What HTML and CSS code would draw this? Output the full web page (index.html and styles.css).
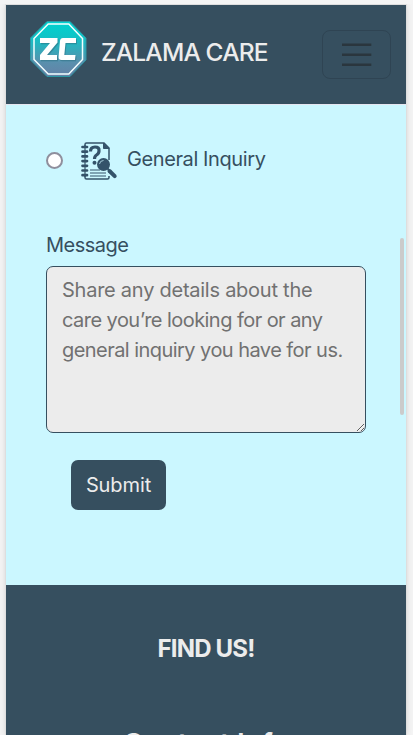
FILE: index.html
```html
<!DOCTYPE html>
<html lang="en">
<head>
<meta charset="utf-8">
<title>Zalama Care</title>
<link rel="stylesheet" href="styles.css">
</head>
<body>
<div class="screen">
  <header class="navbar">
    <svg class="logo" viewBox="0 0 57 57">
      <defs>
        <linearGradient id="teal" x1="0" y1="0" x2="0" y2="1">
          <stop offset="0" stop-color="#00d2d0"/>
          <stop offset=".25" stop-color="#0cc6c8"/>
          <stop offset=".75" stop-color="#5a8fad"/>
          <stop offset="1" stop-color="#6481a6"/>
        </linearGradient>
      </defs>
      <path d="M17 .5H40L56 17V39L40 55.500H17L.5 39V17Z" fill="url(#teal)" stroke="#2c97a4"/>
      <path d="M18.200 3H38.800L52.500 17.500V38.500L38.800 53H18.200L4 38.500V17.500Z" fill="none" stroke="#f4ffff" stroke-width="1.500"/>
      <g fill="#2e6d80" opacity=".5" transform="translate(1 1.200)">
        <path d="M10 17H27.500V21.500L17 34H27V39H10V34L20 22H10Z"/>
        <path d="M33 17H46V22H35.500L34.300 34H45.500L45 39H31.500Q28.300 39 28.600 36L30 20Q30.300 17 33 17Z"/>
      </g>
      <g fill="#fff">
        <path d="M10 17H27.500V21.500L17 34H27V39H10V34L20 22H10Z"/>
        <path d="M33 17H46V22H35.500L34.300 34H45.500L45 39H31.500Q28.300 39 28.600 36L30 20Q30.300 17 33 17Z"/>
      </g>
    </svg>
    <span class="brand">ZALAMA CARE</span>
    <button class="toggler" aria-label="Menu">
      <svg viewBox="0 0 30 30"><path d="M0 4.700H29.300M0 14.700H29.300M0 24.700H29.300" stroke="#2a363e" stroke-width="2.400"/></svg>
    </button>
  </header>
  <main class="form">
    <label class="option">
      <span class="radio"></span>
      <svg class="inquiry" viewBox="0 0 37 38">
        <g fill="none" stroke="#34536a">
          <path d="M4 4V2.500Q4 1 5.500 1H23L28 6V18M28 34V35.500Q28 37 26.500 37H5.500Q4 37 4 35.500V34" stroke-width="1.500"/>
          <path d="M22.500 1V6.500H28Z" fill="#34536a" stroke-width="1"/>
          <path d="M4 3V35" stroke-width="1.200"/>
          <path d="M1.500 5H6M1.500 9.700H6M1.500 14.400H6M1.500 19.100H6M1.500 23.800H6M1.500 28.500H6M1.500 33.200H6" stroke-width="2.700" stroke-linecap="round"/>
          <path d="M9.500 9.500Q9.500 5 14 5T18 9Q18 11.500 15.500 13Q13.500 14.200 13.500 17" stroke-width="3.200"/>
          <path d="M9 28H19M9 31H25M9 34H25" stroke-width="1.200"/>
          <path d="M28.500 29L33.700 34.200" stroke-width="4" stroke-linecap="round"/>
          <path d="M26 26L30 30" stroke-width="2"/>
        </g>
        <circle cx="13.500" cy="20.700" r="2" fill="#34536a"/>
        <circle cx="22.500" cy="22.500" r="6.500" fill="#34536a"/>
        <path d="M18.500 22Q19 18.500 22.500 18.500" fill="none" stroke="#a4cbd8" stroke-width="1"/>
      </svg>
      <span class="option-text">General Inquiry</span>
    </label>
    <div class="message-label" id="message-label">Message</div>
    <div class="message" role="textbox" aria-labelledby="message-label">
      <span class="line">Share any details about the</span>
      <span class="line tight">care you’re looking for or any</span>
      <span class="line tight">general inquiry you have for us.</span>
    </div>
    <button class="submit">Submit</button>
  </main>
  <footer class="footer">
    <h2 class="find">FIND US!</h2>
    <h3 class="contact">Contact Info</h3>
  </footer>
  <div class="scroll-thumb"></div>
</div>
</body>
</html>
```
FILE: styles.css
```css
* { box-sizing: border-box; }
body {
  margin: 0;
  height: 735px;
  overflow: hidden;
  padding: 5px 7px 0 6px;
  background: #f4f4f4;
  font-family: Inter, "Liberation Sans", sans-serif;
  font-size: 20px;
  font-weight: 400;
  color: #364f5f;
}
.screen {
  position: relative;
  height: 730px;
  overflow: hidden;
  background: #cbf7ff;
  box-shadow: 0 0 0 1px #dedede, 0 0 6px #ccc;
  clip-path: inset(-1px -7px 0 -6px);
}
.navbar {
  display: flex;
  align-items: flex-start;
  height: 100px;
  padding: 16px 15px 0 24px;
  background: #364f5f;
  border-bottom: 1px solid #e6e6f0;
}
.logo { width: 57px; height: 57px; flex: none; }
.brand {
  margin: 16px 0 0 14px;
  font-size: 24.500px;
  line-height: 30px;
  font-weight: 500;
  letter-spacing: -.85px;
  color: #ececec;
  white-space: nowrap;
}
.toggler {
  margin: 9px 0 0 auto;
  width: 69px;
  height: 49px;
  padding: 9px 19px;
  border: 1px solid #2f4453;
  border-radius: 8px;
  background: none;
}
.toggler svg { display: block; width: 30px; height: 30px; }
.form { height: 480px; padding: 37px 40px 0; }
.option { display: flex; height: 38px; align-items: flex-start; }
.radio {
  width: 17px;
  height: 17px;
  margin-top: 10px;
  border: 2px solid #8f8f9d;
  border-radius: 50%;
  background: #fff;
}
.inquiry { width: 37px; height: 38px; margin-left: 18px; }
.option-text { margin-left: 9px; line-height: 34px; letter-spacing: -.4px; white-space: nowrap; }
.message-label { margin-top: 50px; line-height: 30px; letter-spacing: -.5px; }
.message {
  width: 320px;
  height: 167px;
  margin-top: 6px;
  padding: 8px 15px;
  border: 1px solid #364f5f;
  border-radius: 7px;
  background: #ececec;
  color: #717171;
  line-height: 30px;
  overflow: hidden;
  resize: vertical;
}
.line { display: block; letter-spacing: -.25px; white-space: nowrap; }
.tight { letter-spacing: -.55px; }
.submit {
  display: block;
  width: 95px;
  height: 50px;
  margin: 27px 0 0 25px;
  padding: 0;
  border: 0;
  border-radius: 7px;
  background: #364f5f;
  color: #ececec;
  font: inherit;
  letter-spacing: -.1px;
}
.footer {
  height: 150px;
  padding-top: 49px;
  overflow: hidden;
  background: #364f5f;
  color: #ececec;
  text-align: center;
}
.find { margin: 0; font-size: 24px; line-height: 30px; font-weight: 700; letter-spacing: -.8px; }
.contact { margin: 63px 0 0; font-size: 28px; line-height: 34px; font-weight: 600; }
.scroll-thumb {
  position: absolute;
  top: 233px;
  right: 2px;
  width: 4px;
  height: 177px;
  border-radius: 2px;
  background: #cbcbcb;
}
```
